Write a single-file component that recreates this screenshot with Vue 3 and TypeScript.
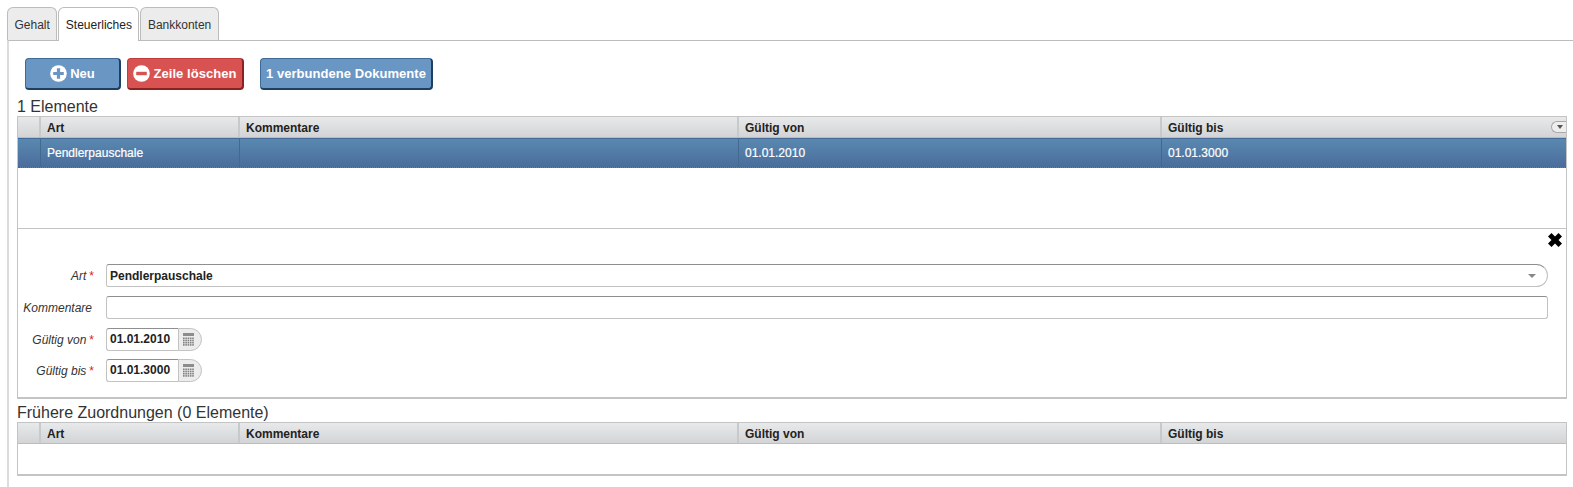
<template>
  <div class="page">
    <div class="tabs">
      <div v-for="t in tabs" :key="t" :class="{ tab: true, active: t === activeTab }">{{ t }}</div>
    </div>
    <div class="panel">
      <div class="toolbar">
        <button class="btn btn-blue btn-new">
          <svg class="btn-icon" viewBox="0 0 18 18"><circle cx="9" cy="9" r="8.8" fill="#fff" /><path d="M7.3 3.4h3.4v3.900h3.900v3.400h-3.900v3.900H7.300v-3.900H3.400V7.300h3.900z" fill="#6b96c3" /></svg>
          Neu
        </button>
        <button class="btn btn-red">
          <svg class="btn-icon" viewBox="0 0 18 18"><circle cx="9" cy="9" r="8.8" fill="#fff" /><rect x="3.4" y="7.200" width="11.200" height="3.600" fill="#d95252" /></svg>
          Zeile löschen
        </button>
        <button class="btn btn-blue btn-docs">1 verbundene Dokumente</button>
      </div>

      <div class="title">1 Elemente</div>
      <div class="grid-box">
        <div class="grid-row grid-head">
          <div class="cell"></div>
          <div v-for="c in columns" :key="c" class="cell">{{ c }}</div>
          <span class="menu-btn"><i></i></span>
        </div>
        <div class="grid-row grid-selected">
          <div class="cell"></div>
          <div v-for="(v, i) in selectedRow" :key="i" class="cell">{{ v }}</div>
        </div>
        <div class="grid-empty"></div>

        <div class="editor">
          <div class="close-row">
            <svg class="close" viewBox="0 0 14 14"><path d="M3.500 0 7 3.500 10.500 0 14 3.500 10.500 7 14 10.500 10.500 14 7 10.500 3.500 14 0 10.500 3.500 7 0 3.500z" fill="#000" /></svg>
          </div>
          <div class="form-row">
            <label class="lbl">Art<em>*</em></label>
            <div class="field field-select">
              <span>Pendlerpauschale</span>
              <i class="caret"></i>
            </div>
          </div>
          <div class="form-row">
            <label class="lbl lbl-plain">Kommentare</label>
            <div class="field field-text"></div>
          </div>
          <div v-for="d in dates" :key="d.label" class="form-row">
            <label class="lbl">{{ d.label }}<em>*</em></label>
            <div class="date">
              <div class="date-value">{{ d.value }}</div>
              <div class="date-btn">
                <svg viewBox="0 0 11 13" width="11" height="13">
                  <rect x="0" y="0" width="11" height="3" fill="#8c8c8c" />
                  <g fill="#808080">
                    <template v-for="y in [4.500, 6.700, 8.900, 11.100]" :key="y">
                      <rect v-for="x in [0, 2.300, 4.600, 6.900, 9.200]" :key="x" :x="x" :y="y" width="1.600" height="1.600" />
                    </template>
                  </g>
                </svg>
              </div>
            </div>
          </div>
        </div>
      </div>

      <div class="title title-second">Frühere Zuordnungen (0 Elemente)</div>
      <div class="grid-box">
        <div class="grid-row grid-head">
          <div class="cell"></div>
          <div v-for="c in columns" :key="c" class="cell">{{ c }}</div>
        </div>
        <div class="grid-empty-small"></div>
      </div>
    </div>
  </div>
</template>

<script setup lang="ts">
const tabs = ['Gehalt', 'Steuerliches', 'Bankkonten']
const activeTab = 'Steuerliches'
const columns = ['Art', 'Kommentare', 'Gültig von', 'Gültig bis']
const selectedRow = ['Pendlerpauschale', '', '01.01.2010', '01.01.3000']
const dates = [
  { label: 'Gültig von', value: '01.01.2010' },
  { label: 'Gültig bis', value: '01.01.3000' }
]
</script>

<style>
html, body {
  margin: 0;
  background: #fff;
}
</style>

<style scoped>
.page {
  width: 1573px;
  height: 487px;
  overflow: hidden;
  padding: 7px 0 0 7px;
  box-sizing: border-box;
  font-family: "Liberation Sans", Arial, sans-serif;
  font-size: 12px;
  color: #222;
}

.tabs {
  display: flex;
  gap: 1px;
  height: 34px;
}

.tab {
  box-sizing: border-box;
  height: 33px;
  padding: 10px 6.500px 0;
  background: #ececec;
  border: 1px solid #bcbcbc;
  border-bottom: 0;
  border-radius: 6px 6px 0 0;
  color: #333;
}

.tab.active {
  height: 34px;
  background: #fff;
  color: #222;
  position: relative;
  z-index: 1;
}

.panel {
  margin-top: -1px;
  height: 446px;
  border-top: 1px solid #bcbcbc;
  border-left: 2px solid #dcdcdc;
  padding-left: 8px;
  padding-right: 6px;
}

.toolbar {
  display: flex;
  padding: 17px 0 0 8px;
  height: 31px;
}

.btn {
  box-sizing: border-box;
  height: 32px;
  display: flex;
  align-items: center;
  justify-content: center;
  gap: 3px;
  border-radius: 4px;
  padding: 0;
  font-family: inherit;
  font-size: 13px;
  font-weight: bold;
  color: #fff;
  letter-spacing: 0.050px;
}

.btn-blue {
  background: #6a96c4;
  border: 1px solid #3d6a96;
  border-bottom: 2px solid #1f3f60;
  border-right: 2px solid #1f3f60;
}

.btn-red {
  background: #d95252;
  border: 1px solid #c23c3c;
  border-bottom: 2px solid #8a2222;
  border-right: 2px solid #8a2222;
  width: 117px;
  margin-left: 6px;
}

.btn-new {
  width: 96px;
}

.btn-docs {
  width: 173px;
  margin-left: 16px;
}

.btn-icon {
  width: 17px;
  height: 17px;
}

.title {
  height: 17px;
  margin-top: 10px;
  font-size: 16px;
  line-height: 15px;
  color: #333;
}

.title-second {
  margin-top: 6px;
}

.grid-box {
  box-sizing: border-box;
  width: 1550px;
  border: 1px solid #c4c4c4;
  border-bottom: 2px solid #c4c4c4;
}

.grid-row {
  display: grid;
  grid-template-columns: 23px 199px 499px 423px 1fr;
  position: relative;
}

.grid-head {
  height: 21px;
  box-sizing: border-box;
  background: linear-gradient(#e8e9eb, #d3d4d6);
  border-bottom: 1px solid #bdbdbd;
  font-weight: bold;
  color: #222;
  line-height: 22px;
}

.grid-head .cell {
  height: 20px;
  border-right: 2px solid #c8c9cb;
  padding-left: 6px;
  box-sizing: border-box;
}

.grid-head .cell:first-child {
  padding-left: 0;
}

.grid-head .cell:nth-child(5) {
  border-right: 0;
}

.menu-btn {
  position: absolute;
  right: 0;
  top: 4px;
  width: 15px;
  height: 12px;
  box-sizing: border-box;
  border: 1px solid #aaa;
  border-right: 0;
  border-radius: 7px 0 0 7px;
  background: #eee;
}

.menu-btn i {
  position: absolute;
  left: 5px;
  top: 3px;
  border: 3px solid transparent;
  border-top: 4px solid #555;
  border-bottom: 0;
}

.grid-selected {
  height: 30px;
  box-sizing: border-box;
  background: linear-gradient(#5988b0, #4a6d9c);
  border-top: 1px dotted #1f6fc0;
  border-bottom: 1px dotted #1f6fc0;
  color: #fff;
  line-height: 28px;
  -webkit-text-stroke: 0.200px #fff;
}

.grid-selected .cell {
  border-right: 1px solid #44698f;
  padding-left: 6px;
  box-sizing: border-box;
}

.grid-selected .cell:first-child {
  padding-left: 0;
}

.grid-selected .cell:nth-child(5) {
  border-right: 0;
}

.grid-empty {
  height: 60px;
  border-bottom: 1px solid #c4c4c4;
}

.grid-empty-small {
  height: 30px;
}

.editor {
  height: 168px;
  box-sizing: border-box;
}

.close-row {
  display: flex;
  justify-content: flex-end;
  height: 35px;
  padding: 4px 4px 0 0;
  box-sizing: border-box;
}

.close {
  width: 14px;
  height: 14px;
}

.form-row {
  display: flex;
  align-items: center;
  height: 23px;
  margin-bottom: 9px;
}

.form-row:nth-child(4) {
  margin-bottom: 8px;
}

.lbl {
  box-sizing: border-box;
  width: 76px;
  text-align: right;
  font-style: italic;
  color: #333;
  white-space: nowrap;
}

.lbl-plain {
  padding-right: 2px;
}

.lbl em {
  color: #e02020;
  margin-left: 3px;
  font-style: normal;
}

.field {
  box-sizing: border-box;
  height: 23px;
  margin-left: 12px;
  border: 1px solid #c2c2c2;
  border-top: 1px solid #8f8f8f;
  border-radius: 3px;
  background: #fff;
}

.field-text {
  width: 1442px;
}

.field-select {
  width: 1442px;
  display: flex;
  align-items: center;
  justify-content: space-between;
  padding: 0 11px 0 3px;
  font-weight: bold;
  color: #222;
  border-radius: 3px 12px 12px 3px;
}

.caret {
  border: 4px solid transparent;
  border-top: 4px solid #888;
  border-bottom: 0;
}

.date {
  display: flex;
  margin-left: 12px;
  height: 23px;
}

.date-value {
  box-sizing: border-box;
  width: 72px;
  height: 23px;
  padding: 0 3px;
  line-height: 21px;
  font-weight: bold;
  border: 1px solid #c2c2c2;
  border-top: 1px solid #8f8f8f;
  border-right: 0;
  border-radius: 3px 0 0 3px;
}

.date-btn {
  box-sizing: border-box;
  width: 24px;
  height: 23px;
  display: flex;
  align-items: center;
  padding-left: 4px;
  background: #ececec;
  border: 1px solid #c2c2c2;
  border-radius: 0 12px 12px 0;
}
</style>
